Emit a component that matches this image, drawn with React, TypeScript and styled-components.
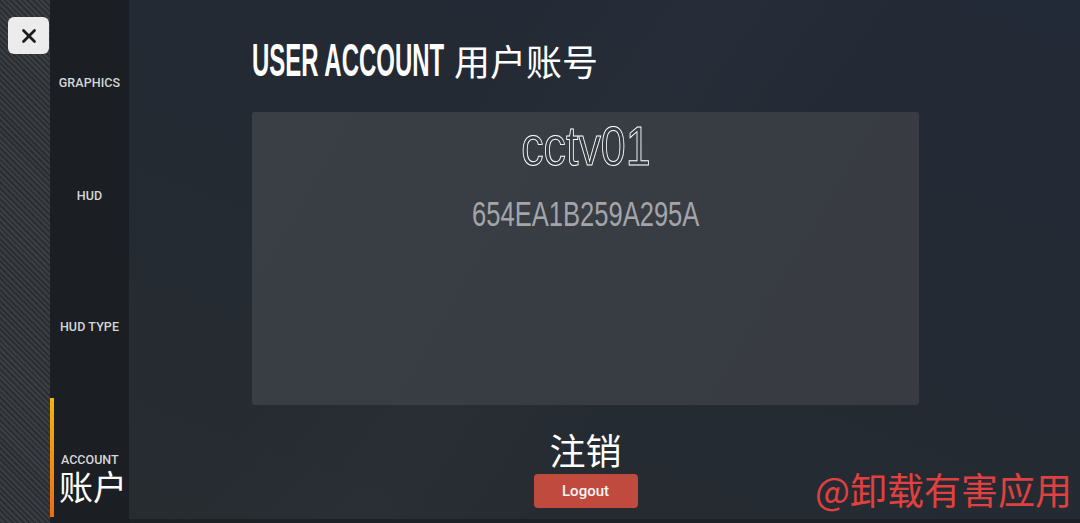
import React from 'react'
import styled, { createGlobalStyle } from 'styled-components'
import { X } from 'lucide-react'

const GlobalStyle = createGlobalStyle`
  html, body {
    margin: 0;
    padding: 0;
    background: #1b1e22;
  }
  body {
    font-family: Roboto, 'Noto Sans', 'Noto Sans CJK SC', sans-serif;
    overflow: hidden;
  }
`

const CJK = `'Noto Sans CJK SC', 'Noto Sans', sans-serif`
const SANS = `'Liberation Sans', Arial, sans-serif`

const Screen = styled.div`
  display: flex;
  width: 1080px;
  height: 523px;
  position: relative;
  overflow: hidden;
`

const StripeRail = styled.div`
  width: 50px;
  flex-shrink: 0;
  padding-top: 17px;
  padding-left: 8px;
  box-sizing: border-box;
  background: repeating-linear-gradient(
    45deg,
    #2b2e33 0px,
    #2b2e33 2px,
    #3b3e43 2px,
    #3b3e43 4px
  );
`

const CloseButton = styled.button`
  width: 41px;
  height: 37px;
  border: none;
  border-radius: 6px;
  background: #ececec;
  display: flex;
  align-items: center;
  justify-content: center;
  padding: 0;
  color: #1c1c1c;
  cursor: pointer;
`

const Sidebar = styled.nav`
  width: 79px;
  flex-shrink: 0;
  background: #1b1e22;
  display: flex;
  flex-direction: column;
`

const NavTab = styled.div<{ $offset: number }>`
  margin-top: ${(p) => p.$offset}px;
  text-align: center;
  font-size: 12.5px;
  font-weight: 500;
  line-height: 16px;
  color: #d4d6d9;
  letter-spacing: 0.1px;
`

const ActiveTab = styled.div<{ $offset: number }>`
  margin-top: ${(p) => p.$offset}px;
  height: 119px;
  border-left: 4px solid transparent;
  border-image: linear-gradient(180deg, #f3b40c 0%, #f28a12 60%, #ef6a10 100%) 1;
  box-sizing: border-box;
  display: flex;
  flex-direction: column;
  justify-content: flex-end;
  padding: 0 0 12px 5px;
`

const TabLabel = styled.div`
  font-size: 12.5px;
  font-weight: 500;
  line-height: 14px;
  color: #d4d6d9;
  padding-left: 2px;
`

const TabLabelCn = styled.div`
  font-family: ${CJK};
  font-size: 34px;
  line-height: 38px;
  color: #ffffff;
`

const Main = styled.main`
  flex: 1;
  position: relative;
  box-sizing: border-box;
  padding: 36px 0 0 123px;
  border-bottom: 4px solid #1d2125;
  background:
    linear-gradient(125deg, rgba(255, 255, 255, 0) 30%, rgba(255, 255, 255, 0.015) 45%, rgba(255, 255, 255, 0) 60%),
    linear-gradient(200deg, #232a37 0%, #242a33 45%, #262c30 100%);
  display: flex;
  flex-direction: column;
`

const Title = styled.h1`
  margin: 0;
  display: flex;
  align-items: center;
  height: 48px;
  color: #ffffff;
`

const TitleEn = styled.span`
  display: inline-block;
  width: 192px;
  white-space: nowrap;
  font-family: ${SANS};
  font-weight: 700;
  font-size: 47px;
  line-height: 48px;
  > span {
    display: inline-block;
    transform: scaleX(0.51);
    transform-origin: left center;
  }
`

const TitleCn = styled.span`
  margin-left: 10px;
  font-family: ${CJK};
  font-weight: 400;
  font-size: 36px;
  line-height: 48px;
`

const Column = styled.div`
  width: 667px;
  display: flex;
  flex-direction: column;
  align-items: center;
`

const Card = styled.section`
  margin-top: 28px;
  width: 100%;
  height: 293px;
  border-radius: 3px;
  background: linear-gradient(120deg, #3a3e45 0%, #383c43 50%, #383b42 100%);
  display: flex;
  flex-direction: column;
  align-items: center;
`

const Squeezed = styled.span<{ $scale: number }>`
  display: inline-block;
  white-space: nowrap;
  transform: scaleX(${(p) => p.$scale});
  transform-origin: center;
`

const UserName = styled.div`
  margin-top: 6px;
  font-family: ${SANS};
  font-size: 56px;
  line-height: 56px;
  color: transparent;
  -webkit-text-stroke: 1px #ffffff;
`

const UserId = styled.div`
  margin-top: 22px;
  font-family: ${SANS};
  font-size: 35px;
  line-height: 35px;
  color: #a3a5aa;
`

const LogoutCn = styled.div`
  margin-top: 22px;
  font-family: ${CJK};
  font-size: 36px;
  line-height: 44px;
  color: #ffffff;
`

const LogoutButton = styled.button`
  margin-top: 3px;
  width: 104px;
  height: 34px;
  border: none;
  border-radius: 4px;
  background: #c14a3f;
  color: #f5f5f5;
  font-family: Roboto, sans-serif;
  font-weight: 500;
  font-size: 15px;
  cursor: pointer;
`

const Watermark = styled.div`
  position: absolute;
  right: 8px;
  bottom: 8px;
  font-family: ${CJK};
  font-size: 37px;
  line-height: 44px;
  color: #e0403f;
`

export default function App() {
  return (
    <>
      <GlobalStyle />
      <Screen>
        <StripeRail>
          <CloseButton aria-label='close'>
            <X size={22} strokeWidth={3} />
          </CloseButton>
        </StripeRail>
        <Sidebar>
          <NavTab $offset={75}>GRAPHICS</NavTab>
          <NavTab $offset={97}>HUD</NavTab>
          <NavTab $offset={115}>HUD TYPE</NavTab>
          <ActiveTab $offset={63}>
            <TabLabel>ACCOUNT</TabLabel>
            <TabLabelCn>账户</TabLabelCn>
          </ActiveTab>
        </Sidebar>
        <Main>
          <Title>
            <TitleEn>
              <span>USER ACCOUNT</span>
            </TitleEn>
            <TitleCn>用户账号</TitleCn>
          </Title>
          <Column>
            <Card>
              <UserName>
                <Squeezed $scale={0.8}>cctv01</Squeezed>
              </UserName>
              <UserId>
                <Squeezed $scale={0.73}>654EA1B259A295A</Squeezed>
              </UserId>
            </Card>
            <LogoutCn>注销</LogoutCn>
            <LogoutButton>Logout</LogoutButton>
          </Column>
          <Watermark>@卸载有害应用</Watermark>
        </Main>
      </Screen>
    </>
  )
}
